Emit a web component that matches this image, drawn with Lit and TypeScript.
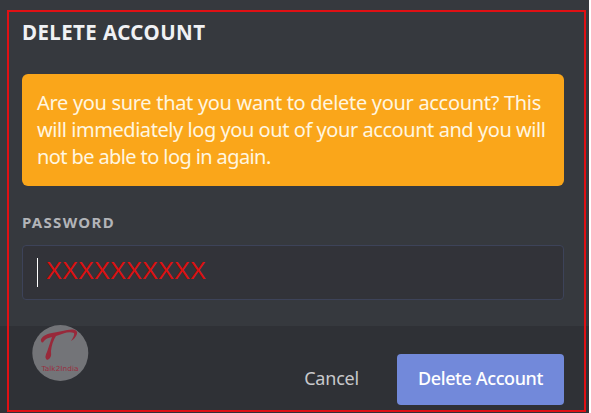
import { LitElement, html, css } from "lit";
import { customElement } from "lit/decorators.js";

@customElement("app-root")
class AppRoot extends LitElement {
  static styles = css`
    :host { display: block; width: 591px; height: 413px; background: #fff; overflow: hidden; position: relative;
      font-family: "Noto Sans", "Open Sans", sans-serif; }
    .dialog { width: 589px; height: 413px; background: #36393e; display: flex; flex-direction: column; }
    .body { height: 326px; padding: 20px 25px 0 22px; box-sizing: border-box; display: flex; flex-direction: column; }
    .title { margin: 0; height: 26px; line-height: 25px; font-size: 20.5px; font-weight: 700; color: #f0f1f4; letter-spacing: 0.42px; white-space: nowrap; }
    .warning { margin-top: 28px; height: 112px; box-sizing: border-box; border-radius: 6px; background: #faa61a; color: #fff6e0; padding: 15px 15px; font-size: 20px; line-height: 27px; }
    .line { display: block; white-space: nowrap; }
    .l1 { letter-spacing: -0.31px; }
    .l2 { letter-spacing: -0.44px; }
    .l3 { letter-spacing: -0.6px; }
    .label { margin-top: 27px; height: 20px; line-height: 19px; font-size: 15px; font-weight: 700; color: #b2b4b8; letter-spacing: 1.3px; }
    .field { margin-top: 12px; height: 55px; box-sizing: border-box; border: 1px solid #3d4359; border-radius: 4px; background: #323339; display: flex; padding: 12px 14px; }
    .caret { width: 1px; height: 29px; background: #fff; }
    .mask { margin-left: 8px; font: 24px/25px "Liberation Sans", sans-serif; color: #dd1010; }
    .footer { flex: 1; background: #2f3136; display: flex; align-items: flex-start; padding: 0 25px 0 32px; }
    .logo { width: 57px; height: 58px; margin-right: auto; margin-top: -2px; }
    .cancel { margin: 28px 38px 0 0; font-size: 18px; line-height: 49px; letter-spacing: -0.2px; color: #c8c9cc; }
    .delete { margin-top: 28px; width: 167px; height: 51px; line-height: 49px; border-radius: 4px; background: #7289da; color: #fff; text-align: center; font-size: 18px; font-weight: 500; letter-spacing: -0.4px; white-space: nowrap; }
    .outline { position: absolute; left: 7px; top: 10px; width: 579px; height: 402px; box-sizing: border-box; border: 2px solid #e01014; pointer-events: none; }
  `;

  render() {
    return html`
      <div class="dialog">
        <div class="body">
          <h1 class="title">DELETE ACCOUNT</h1>
          <div class="warning">
            <span class="line l1">Are you sure that you want to delete your account? This</span>
            <span class="line l2">will immediately log you out of your account and you will</span>
            <span class="line l3">not be able to log in again.</span>
          </div>
          <div class="label">PASSWORD</div>
          <div class="field"><span class="caret"></span><span class="mask">XXXXXXXXXX</span></div>
        </div>
        <div class="footer">
          <svg class="logo" viewBox="0 0 57 58">
            <circle cx="28.3" cy="29" r="28" fill="#737478" />
            <path d="M9 17C8 14 13 10 20 9C28 8 35 5 41 5.500Q46 6 45 10Q43 15 39 17Q43 11 42 9C36 7 31 10 24 12Q20 18 19 27Q20 35 15 36Q12 33 15 28L20 13Q14 14 12 17Q10 20 9 17Z" fill="#98293a" />
            <text x="9.500" y="47" font-size="7" font-family="DejaVu Sans, sans-serif" textLength="37" lengthAdjust="spacingAndGlyphs" fill="#98303f">Talk2India</text>
          </svg>
          <div class="cancel">Cancel</div>
          <div class="delete">Delete Account</div>
        </div>
      </div>
      <div class="outline"></div>
    `;
  }
}
